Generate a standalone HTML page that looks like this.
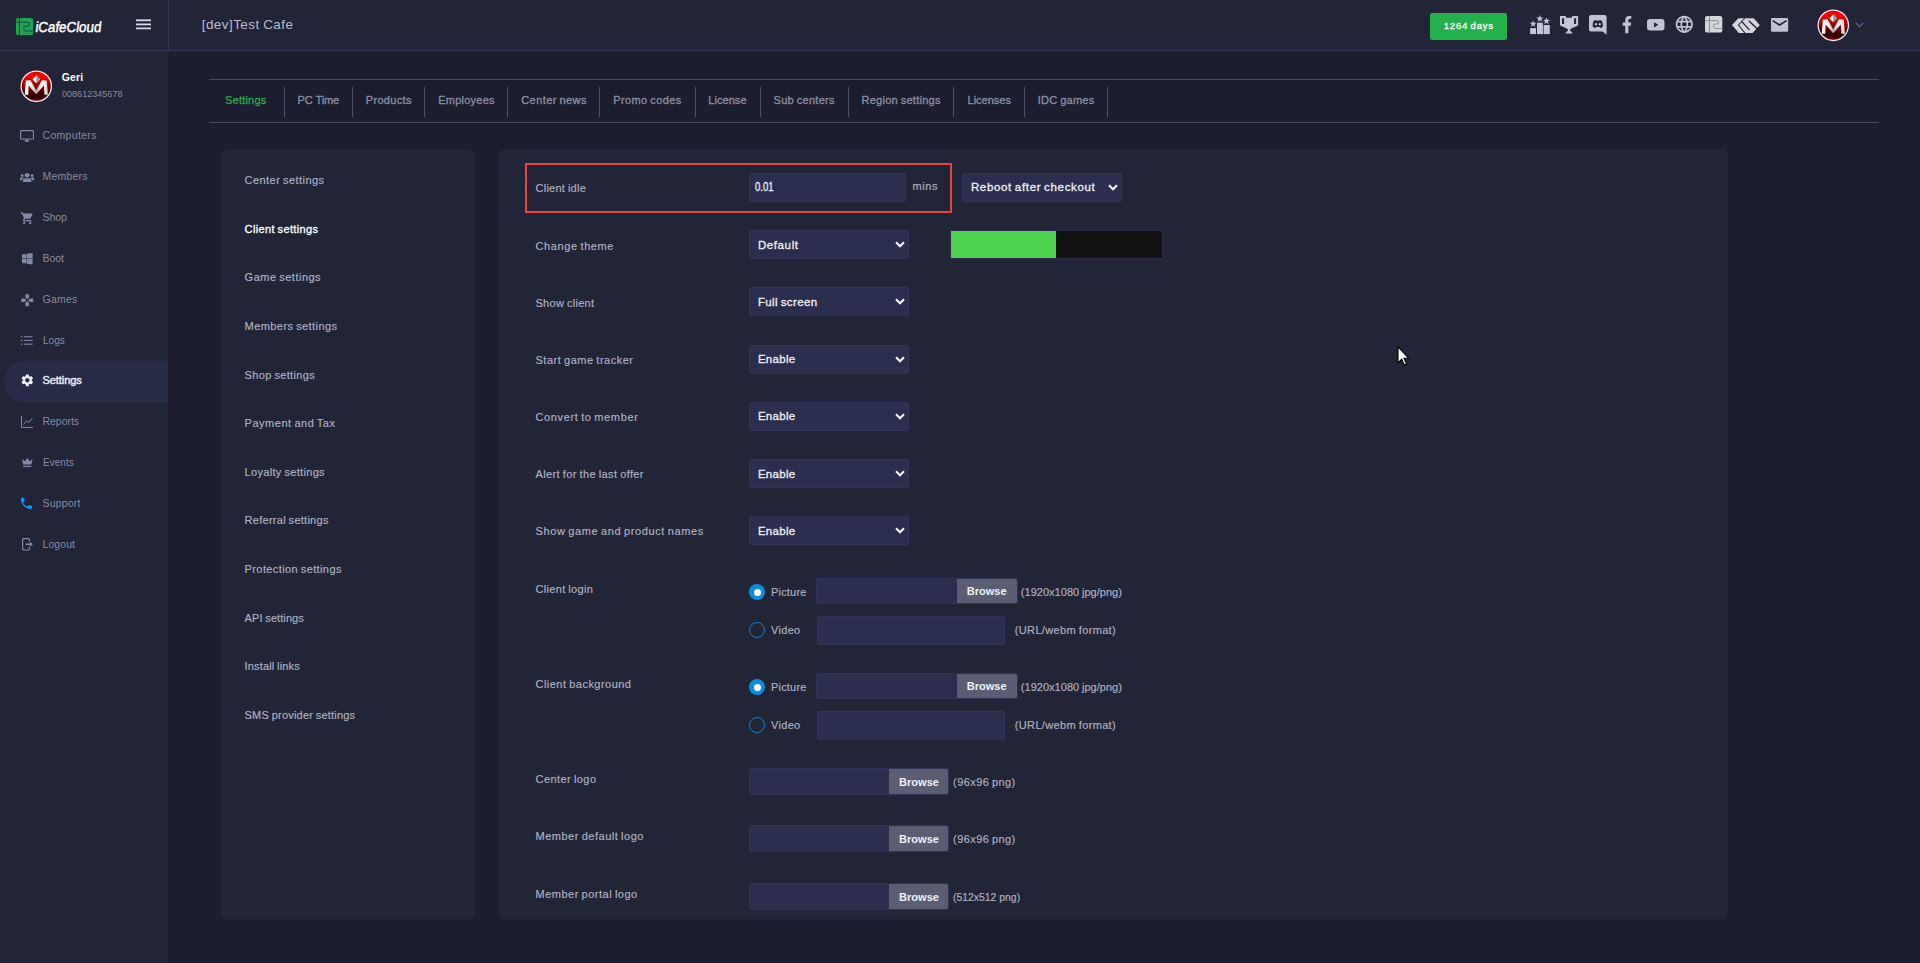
<!DOCTYPE html>
<html lang="en">
<head>
<meta charset="utf-8">
<title>iCafeCloud - Client settings</title>
<style>
*{box-sizing:border-box;margin:0;padding:0}
html,body{width:1920px;height:963px;overflow:hidden;background:#1c1d2e;font-family:"Liberation Sans",sans-serif}
.a{position:absolute}
.t{position:absolute;white-space:pre;line-height:20px;height:20px}
#hdr{left:0;top:0;width:1920px;height:50px;background:#222438}
#hline{left:0;top:50px;width:1920px;height:1px;background:#33355a}
#vline{left:168px;top:0;width:1px;height:50px;background:#33355a}
#side{left:0;top:51px;width:168px;height:912px;background:#222438}
#active{left:4px;top:361px;width:164px;height:41px;background:#282b48;border-radius:20px 0 0 20px}
.hl{height:1px;background:#474a5f;left:209px;width:1670px}
.vs{width:1px;height:30px;top:87px;background:#4d5066}
.panel{background:#222438;border-radius:6px}
.inp{background:#2c2e4f;border:1px solid #30335a;border-radius:2px}
.brw{background:#5a5d73;border-radius:0 2px 2px 0}
.radio{width:16px;height:16px;border-radius:50%}
.r1{background:#0d8ddb}
.r1:after{content:"";position:absolute;left:4.500px;top:4.500px;width:7px;height:7px;border-radius:50%;background:#fff}
.r0{border:1.5px solid #0b84d0}
svg{position:absolute;overflow:visible}
</style>
</head>
<body>
<!-- header + sidebar chrome -->
<div class="a" id="hdr"></div>
<div class="a" id="hline"></div>
<div class="a" id="vline"></div>
<div class="a" id="side"></div>
<div class="a" id="active"></div>

<!-- tab strip -->
<div class="a hl" style="top:79px"></div>
<div class="a hl" style="top:122px"></div>
<div class="a vs" style="left:284px"></div>
<div class="a vs" style="left:352px"></div>
<div class="a vs" style="left:424px"></div>
<div class="a vs" style="left:507px"></div>
<div class="a vs" style="left:599px"></div>
<div class="a vs" style="left:695px"></div>
<div class="a vs" style="left:760px"></div>
<div class="a vs" style="left:848px"></div>
<div class="a vs" style="left:953px"></div>
<div class="a vs" style="left:1024px"></div>
<div class="a vs" style="left:1107px"></div>

<!-- panels -->
<div class="a panel" style="left:221px;top:149px;width:254px;height:770px"></div>
<div class="a panel" style="left:499px;top:149px;width:1229px;height:770px"></div>

<!-- form controls -->
<div class="a" style="left:525px;top:163px;width:427px;height:50px;border:2px solid #ee4242"></div>
<div class="a inp" style="left:749px;top:173px;width:157px;height:29px"></div>
<div class="a inp" style="left:962px;top:173px;width:160px;height:29px"></div>
<div class="a inp" style="left:749px;top:230px;width:160px;height:29px"></div>
<div class="a inp" style="left:749px;top:287px;width:160px;height:29px"></div>
<div class="a inp" style="left:749px;top:345px;width:160px;height:29px"></div>
<div class="a inp" style="left:749px;top:402px;width:160px;height:29px"></div>
<div class="a inp" style="left:749px;top:459px;width:160px;height:29px"></div>
<div class="a inp" style="left:749px;top:516px;width:160px;height:29px"></div>
<!-- theme swatch -->
<div class="a" style="left:950px;top:230px;width:213px;height:29px;background:#111111;border:1px solid #2a2c4a"></div>
<div class="a" style="left:951px;top:231px;width:105px;height:27px;background:#4bd14d"></div>

<!-- client login -->
<div class="a radio r1" style="left:749px;top:584px"></div>
<div class="a inp" style="left:816px;top:578px;width:202px;height:26px"></div>
<div class="a brw" style="left:957px;top:579px;width:60px;height:24px"></div>
<div class="a radio r0" style="left:749px;top:622px"></div>
<div class="a inp" style="left:817px;top:616px;width:188px;height:29px"></div>
<!-- client background -->
<div class="a radio r1" style="left:749px;top:679px"></div>
<div class="a inp" style="left:816px;top:673px;width:202px;height:26px"></div>
<div class="a brw" style="left:957px;top:674px;width:60px;height:24px"></div>
<div class="a radio r0" style="left:749px;top:717px"></div>
<div class="a inp" style="left:817px;top:711px;width:188px;height:29px"></div>
<!-- logos -->
<div class="a inp" style="left:749px;top:768px;width:200px;height:27px"></div>
<div class="a brw" style="left:889px;top:769px;width:59px;height:25px"></div>
<div class="a inp" style="left:749px;top:825px;width:200px;height:27px"></div>
<div class="a brw" style="left:889px;top:826px;width:59px;height:25px"></div>
<div class="a inp" style="left:749px;top:883px;width:200px;height:27px"></div>
<div class="a brw" style="left:889px;top:884px;width:59px;height:25px"></div>

<svg width="0" height="0" style="left:0;top:0">
<defs>
<linearGradient id="avg" x1="0" y1="0" x2="0" y2="1">
<stop offset="0" stop-color="#c40000"/><stop offset="0.13" stop-color="#ff0707"/><stop offset="0.3" stop-color="#d60000"/><stop offset="0.5" stop-color="#8e0000"/><stop offset="0.7" stop-color="#4a0000"/><stop offset="0.84" stop-color="#2e0000"/><stop offset="0.93" stop-color="#5c0000"/><stop offset="1" stop-color="#960000"/>
</linearGradient>
<linearGradient id="avm" x1="0" y1="0" x2="1" y2="0">
<stop offset="0" stop-color="#ffffff"/><stop offset="0.3" stop-color="#f2f2f2"/><stop offset="0.5" stop-color="#a9a9a9"/><stop offset="0.72" stop-color="#f6f6f6"/><stop offset="1" stop-color="#d8d8d8"/>
</linearGradient>

</defs>
</svg>

<!-- logo -->
<svg style="left:16px;top:18px" width="17.200" height="17.100" viewBox="0 0 17.200 17.100">
<rect x="0" y="0" width="17.200" height="17.100" rx="2.200" fill="#20a554"/>
<path d="M3.500 0V17.100" stroke="#1b3a3c" stroke-width="0.900"/>
<path d="M0 4.200H12Q13.600 4.200 13.600 6.200Q13.600 8.200 12 8.200H9.300Q7.700 8.200 7.700 10.400Q7.700 13 9.300 13H17.200" stroke="#1c4440" stroke-width="1" fill="none"/>
</svg>
<!-- hamburger -->
<svg style="left:136px;top:19px" width="15" height="11" viewBox="0 0 15 11">
<rect x="0" y="0.4" width="15" height="1.8" fill="#d9dae4"/><rect x="0" y="4.5" width="15" height="1.8" fill="#d9dae4"/><rect x="0" y="8.5" width="15" height="1.8" fill="#d9dae4"/>
</svg>

<!-- days button -->
<div class="a" style="left:1430px;top:13px;width:77px;height:27px;background:#22b14c;border-radius:2.500px"></div>

<!-- header icons -->
<!-- ranking star -->
<svg style="left:1530px;top:15px" width="20" height="19.200" viewBox="0 0 20 19.200" fill="#c3c6d4">
<rect x="0.100" y="13.100" width="5.900" height="6"/>
<rect x="7" y="7.700" width="5.900" height="11.400"/>
<rect x="13.600" y="10" width="6.200" height="9.100"/>
<path d="M3.10 5.30L3.99 7.68L6.52 7.79L4.54 9.37L5.22 11.81L3.10 10.41L0.98 11.81L1.66 9.37L-0.32 7.79L2.21 7.68Z"/>
<path d="M9.85 -0.10L10.79 2.41L13.46 2.53L11.37 4.19L12.08 6.77L9.85 5.30L7.62 6.77L8.33 4.19L6.24 2.53L8.91 2.41Z"/>
<path d="M16.50 2.40L17.41 4.84L20.02 4.96L17.98 6.58L18.67 9.09L16.50 7.65L14.33 9.09L15.02 6.58L12.98 4.96L15.59 4.84Z"/>
</svg>
<!-- trophy -->
<svg style="left:1560px;top:15.800px" width="18.200" height="17.600" viewBox="0 0 18.200 17.600" fill="#c3c6d4" fill-rule="evenodd">
<path d="M0 0H5.600L6.200 1.700H11.800L12.400 0H18.100V9.200Q16.200 10.700 13.400 11.400L10.100 13.200V14.400L12.900 17.500H5.100L7.900 14.400V13.200L4.600 11.400Q1.800 10.700 0 9.200ZM2 2.200V8H4.100V2.200ZM14 2.200V8H16.100V2.200Z"/>
</svg>
<!-- discord bubble -->
<svg style="left:1589.300px;top:15px" width="17.600" height="19.700" viewBox="0 0 17.600 19.700">
<path d="M2 0H15.600Q17.600 0 17.600 2V19.700L13.600 16.600H2Q0 16.600 0 14.600V2Q0 0 2 0Z" fill="#c0c3d1"/>
<path d="M3.700 11.800Q3.200 8.300 4.800 5.800Q6 5 7.200 4.900l.4.800h2.400l.4-.8q1.200.1 2.400.9Q14.400 8.300 13.900 11.800Q12.600 12.800 11.300 13l-.6-1h-3.800l-.6 1Q5 12.800 3.700 11.800Z" fill="#222438"/>
<ellipse cx="6.900" cy="9.200" rx="1.100" ry="1.250" fill="#c0c3d1"/><ellipse cx="10.700" cy="9.200" rx="1.100" ry="1.250" fill="#c0c3d1"/>
</svg>
<!-- facebook f -->
<svg style="left:1621.600px;top:15.900px" width="10" height="17.200" viewBox="0 0 320 512" fill="#c0c3d1" preserveAspectRatio="none">
<path d="M279.140 288l14.220-92.660h-88.910v-60.130c0-25.350 12.420-50.060 52.240-50.060h40.420V6.260S260.430 0 225.360 0c-73.220 0-121.080 44.380-121.080 124.720v70.620H22.890V288h81.390v224h100.170V288z"/>
</svg>
<!-- youtube -->
<svg style="left:1646.800px;top:18.700px" width="17.500" height="11.600" viewBox="0 0 17.500 11.600">
<rect x="0" y="0" width="17.500" height="11.600" rx="3" fill="#c0c3d1"/>
<path d="M7 3.200L11.300 5.800L7 8.400Z" fill="#222438"/>
</svg>
<!-- globe -->
<svg style="left:1674.300px;top:14px" width="20.600" height="20.600" viewBox="0 0 24 24" fill="#c0c3d1">
<path d="M11.990 2C6.470 2 2 6.480 2 12s4.470 10 9.990 10C17.520 22 22 17.520 22 12S17.520 2 11.990 2zm6.930 6h-2.950c-.32-1.250-.78-2.450-1.380-3.560 1.840.63 3.370 1.910 4.330 3.560zM12 4.040c.83 1.200 1.480 2.530 1.910 3.960h-3.820c.43-1.430 1.080-2.760 1.910-3.960zM4.260 14C4.100 13.360 4 12.690 4 12s.1-1.360.26-2h3.380c-.08.66-.14 1.320-.14 2 0 .68.06 1.340.14 2H4.260zm.82 2h2.950c.32 1.250.78 2.450 1.380 3.560-1.840-.63-3.370-1.900-4.330-3.560zm2.950-8H5.080c.96-1.660 2.490-2.930 4.330-3.560C8.810 5.550 8.350 6.750 8.030 8zM12 19.960c-.83-1.200-1.480-2.530-1.910-3.960h3.820c-.43 1.430-1.080 2.760-1.910 3.960zM14.340 14H9.660c-.09-.66-.16-1.320-.16-2 0-.68.07-1.350.16-2h4.680c.09.65.16 1.320.16 2 0 .68-.07 1.340-.16 2zm.25 5.560c.6-1.110 1.060-2.310 1.380-3.560h2.950c-.96 1.650-2.490 2.930-4.330 3.560zM16.360 14c.08-.66.14-1.320.14-2 0-.68-.06-1.340-.14-2h3.380c.16.64.26 1.310.26 2s-.1 1.360-.26 2h-3.380z"/>
</svg>
<!-- iC grey logo -->
<svg style="left:1705.400px;top:16.400px" width="17.300" height="16.600" viewBox="0 0 17.300 16.600">
<rect x="0" y="0" width="17.300" height="16.600" rx="2.200" fill="#d6d6d8"/>
<path d="M4.400 0V16.600" stroke="#8d8fa0" stroke-width="1.100"/>
<path d="M0 4.600H12.200Q13.600 4.600 13.600 6.300Q13.600 8.100 12.200 8.100H9.900Q8.500 8.100 8.500 10.300Q8.500 12.500 9.900 12.500H17.300" stroke="#8d8fa0" stroke-width="1" fill="none"/>
</svg>
<!-- double-S logo -->
<svg style="left:1732.200px;top:18px" width="27.800" height="15.300" viewBox="0 0 27.800 15.300">
<path d="M0 7.100L6.400 0.200H12.200L5.800 7.100L12.200 15.100H6.800Z" fill="#d6d6d8"/>
<path d="M13.200 0.200H21.700L27.800 7.100L20.700 15.100H13.500L7.100 7.100Z" fill="#d6d6d8"/>
<path d="M9.600 3.400L17.400 11.900" stroke="#222438" stroke-width="1.350"/>
<path d="M16.800 2.700L25.400 11" stroke="#222438" stroke-width="1.350"/>
</svg>
<!-- mail -->
<svg style="left:1770.800px;top:17.500px" width="17.200" height="13.700" viewBox="0 0 17.200 13.700">
<rect x="0" y="0" width="17.200" height="13.700" rx="1.500" fill="#c0c3d1"/>
<path d="M1.600 2.600L8.600 7L15.600 2.600" stroke="#222438" stroke-width="1.500" fill="none"/>
</svg>
<!-- header avatar + chevron -->
<svg style="left:1816.700px;top:8.700px" width="32.600" height="32.600" viewBox="0 0 32 32">
<circle cx="16" cy="16" r="15.6" fill="#1a1018"/>
<circle cx="16" cy="16" r="14.9" fill="url(#avg)" stroke="#efe6e6" stroke-width="1.3"/>
<path d="M4.700 24.300L5.700 10.300L10.300 10L15.900 20L21.500 10L26.300 10.300L27.400 24.300L24 24.300L23.400 15.200L15.900 23.700L8.500 15.200L8.100 24.300Z" fill="url(#avm)"/>
<path d="M15.900 5.400L19.700 9.200L15.900 12.900L12.200 9.200Z" fill="#fbfbfb"/>
<path d="M15.900 5.400L19.700 9.200L15.900 12.900Z" fill="#9c9c9c"/>
</svg>
<svg style="left:1855px;top:22px" width="9" height="6" viewBox="0 0 9 6"><path d="M0.700 0.800L4.500 4.600L8.300 0.800" stroke="#5a6fa6" stroke-width="1.100" fill="none"/></svg>

<!-- sidebar avatar -->
<svg style="left:19.700px;top:69.700px" width="32.600" height="32.600" viewBox="0 0 32 32">
<circle cx="16" cy="16" r="15.6" fill="#1a1018"/>
<circle cx="16" cy="16" r="14.9" fill="url(#avg)" stroke="#efe6e6" stroke-width="1.3"/>
<path d="M4.700 24.300L5.700 10.300L10.300 10L15.900 20L21.500 10L26.300 10.300L27.400 24.300L24 24.300L23.400 15.200L15.900 23.700L8.500 15.200L8.100 24.300Z" fill="url(#avm)"/>
<path d="M15.900 5.400L19.700 9.200L15.900 12.900L12.200 9.200Z" fill="#fbfbfb"/>
<path d="M15.900 5.400L19.700 9.200L15.900 12.900Z" fill="#9c9c9c"/>
</svg>

<!-- sidebar icons -->
<!-- computers -->
<svg style="left:20px;top:130px" width="14" height="12" viewBox="0 0 14 12">
<rect x="0.600" y="0.600" width="12.800" height="8.400" rx="0.800" fill="none" stroke="#838aa8" stroke-width="1.100"/>
<path d="M5.600 9.400h2.800l.9 2.400H4.700z" fill="#838aa8"/>
</svg>
<!-- members -->
<svg style="left:19.900px;top:172.700px" width="14.300" height="9.100" viewBox="0 32 640 448" preserveAspectRatio="none" fill="#838aa8">
<path d="M96 224c35.300 0 64-28.700 64-64s-28.700-64-64-64-64 28.700-64 64 28.700 64 64 64zm448 0c35.300 0 64-28.700 64-64s-28.700-64-64-64-64 28.700-64 64 28.700 64 64 64zm32 32h-64c-17.600 0-33.500 7.100-45.100 18.600 40.300 22.100 68.900 62 75.100 109.400h66c17.700 0 32-14.300 32-32v-32c0-35.300-28.700-64-64-64zm-256 0c61.900 0 112-50.100 112-112S381.900 32 320 32 208 82.100 208 144s50.100 112 112 112zm76.800 32h-8.300c-20.800 10-43.900 16-68.500 16s-47.600-6-68.500-16h-8.300C179.600 288 128 339.600 128 403.200V432c0 26.500 21.500 48 48 48h288c26.500 0 48-21.500 48-48v-28.800c0-63.600-51.600-115.200-115.200-115.200zm-223.700-13.400C161.500 263.100 145.600 256 128 256H64c-35.300 0-64 28.700-64 64v32c0 17.700 14.300 32 32 32h65.900c6.300-47.400 34.900-87.300 75.200-109.400z"/>
</svg>
<!-- shop -->
<svg style="left:19.700px;top:210.600px" width="14.400" height="14.400" viewBox="0 0 24 24" fill="#838aa8">
<path d="M7 18c-1.100 0-1.990.9-1.990 2S5.900 22 7 22s2-.9 2-2-.9-2-2-2zM1 2v2h2l3.600 7.590-1.350 2.450c-.16.28-.25.61-.25.96 0 1.100.9 2 2 2h12v-2H7.420c-.14 0-.25-.11-.25-.25l.03-.12.900-1.630h7.450c.75 0 1.410-.41 1.750-1.030l3.580-6.490c.08-.14.12-.31.120-.48 0-.55-.45-1-1-1H5.210l-.94-2H1zm16 16c-1.100 0-1.990.9-1.990 2s.89 2 1.990 2 2-.9 2-2-.9-2-2-2z"/>
</svg>
<!-- boot (windows) -->
<svg style="left:21.600px;top:253.300px" width="10.600" height="11.500" viewBox="0 0 448 448" fill="#838aa8" preserveAspectRatio="none">
<path d="M0 61.700l183.600-25.300v177.400H0V61.700zm0 324.600l183.600 25.300V236.400H0v149.900zm203.800 28L448 448V236.400H203.800v177.900zm0-380.600v180.100H448V0L203.800 33.700z"/>
</svg>
<!-- games -->
<svg style="left:19.800px;top:292.600px" width="14.400" height="14.400" viewBox="0 0 24 24" fill="#838aa8">
<path d="M15 7.500V2H9v5.500l3 3 3-3zM7.500 9H2v6h5.500l3-3-3-3zM9 16.500V22h6v-5.500l-3-3-3 3zM16.500 9l-3 3 3 3H22V9h-5.500z"/>
</svg>
<!-- logs -->
<svg style="left:21px;top:336px" width="12" height="9" viewBox="0 0 12 9" fill="#838aa8">
<rect x="0" y="0.200" width="1.500" height="1.100"/><rect x="3" y="0.200" width="8.600" height="1.100"/>
<rect x="0" y="3.900" width="1.500" height="1.100"/><rect x="3" y="3.900" width="8.600" height="1.100"/>
<rect x="0" y="7.600" width="1.500" height="1.100"/><rect x="3" y="7.600" width="8.600" height="1.100"/>
</svg>
<!-- settings gear -->
<svg style="left:19.900px;top:373.300px" width="14.600" height="14.600" viewBox="0 0 24 24" fill="#eeeff6">
<path d="M19.140 12.940c.04-.3.06-.61.06-.94 0-.32-.02-.64-.07-.94l2.030-1.580c.18-.14.23-.41.12-.61l-1.920-3.320c-.12-.22-.37-.29-.59-.22l-2.390.96c-.5-.38-1.030-.7-1.620-.94l-.36-2.540c-.04-.24-.24-.41-.48-.41h-3.840c-.24 0-.43.17-.47.41l-.36 2.540c-.59.24-1.130.57-1.620.94l-2.390-.96c-.22-.08-.47 0-.59.220L2.740 8.870c-.12.21-.08.47.12.61l2.030 1.580c-.05.3-.09.63-.09.94s.02.640.07.940l-2.030 1.580c-.18.14-.23.41-.12.610l1.920 3.320c.12.220.37.290.59.220l2.390-.96c.5.38 1.030.7 1.620.94l.36 2.540c.05.24.24.41.48.41h3.840c.24 0 .44-.17.470-.41l.36-2.540c.59-.24 1.130-.56 1.620-.94l2.390.96c.22.08.47 0 .59-.22l1.920-3.320c.12-.22.07-.47-.12-.61l-2.010-1.580zM12 15.600c-1.980 0-3.600-1.620-3.600-3.600s1.620-3.600 3.600-3.600 3.600 1.620 3.600 3.600-1.620 3.600-3.600 3.600z"/>
</svg>
<!-- reports -->
<svg style="left:21px;top:416px" width="12" height="12" viewBox="0 0 12 12" fill="none" stroke="#838aa8">
<path d="M0.500 0V11.400H12" stroke-width="1"/>
<path d="M2.600 8.400L5.600 4.600L7.600 6.600L11.400 2.200" stroke-width="1"/>
</svg>
<!-- events crown -->
<svg style="left:21.800px;top:458.400px" width="10.600" height="9.600" viewBox="0 0 10.600 9.600" fill="#838aa8">
<path d="M0 0.600L2.700 3.600L5.300 0L7.900 3.600L10.600 0.600L9.400 6.600H1.200Z"/>
<rect x="1.200" y="7.800" width="8.200" height="1.300"/>
</svg>
<!-- support phone -->
<svg style="left:19.200px;top:496.400px" width="14.800" height="14.800" viewBox="0 0 24 24" fill="#00a2ff">
<path d="M6.620 10.790c1.440 2.830 3.760 5.140 6.590 6.590l2.200-2.200c.27-.27.67-.36 1.020-.24 1.120.37 2.330.57 3.570.57.55 0 1 .45 1 1V20c0 .55-.45 1-1 1-9.390 0-17-7.610-17-17 0-.55.45-1 1-1h3.500c.55 0 1 .45 1 1 0 1.250.2 2.450.57 3.570.11.35.03.74-.25 1.020l-2.200 2.200z"/>
</svg>
<!-- logout -->
<svg style="left:21.600px;top:538.400px" width="11" height="12.600" viewBox="0 0 11 12.600" fill="none" stroke="#838aa8">
<path d="M7.400 3.600V1.600Q7.400 0.600 6.400 0.600H1.600Q0.600 0.600 0.600 1.600V11Q0.600 12 1.600 12H6.400Q7.400 12 7.400 11V9" stroke-width="1.200"/>
<path d="M3.600 5.500H7.800V3.600L10.800 6.300L7.800 9V7.100H3.600Z" fill="#838aa8" stroke="none"/>
</svg>

<!-- select chevrons -->
<svg style="left:895px;top:241.0px" width="10" height="7" viewBox="0 0 10 7"><path d="M1 1.300L5 5.200L9 1.300" stroke="#f3f4f9" stroke-width="2.100" fill="none"/></svg>
<svg style="left:895px;top:298.0px" width="10" height="7" viewBox="0 0 10 7"><path d="M1 1.300L5 5.200L9 1.300" stroke="#f3f4f9" stroke-width="2.100" fill="none"/></svg>
<svg style="left:895px;top:356.0px" width="10" height="7" viewBox="0 0 10 7"><path d="M1 1.300L5 5.200L9 1.300" stroke="#f3f4f9" stroke-width="2.100" fill="none"/></svg>
<svg style="left:895px;top:413.0px" width="10" height="7" viewBox="0 0 10 7"><path d="M1 1.300L5 5.200L9 1.300" stroke="#f3f4f9" stroke-width="2.100" fill="none"/></svg>
<svg style="left:895px;top:470.2px" width="10" height="7" viewBox="0 0 10 7"><path d="M1 1.300L5 5.200L9 1.300" stroke="#f3f4f9" stroke-width="2.100" fill="none"/></svg>
<svg style="left:895px;top:527.4px" width="10" height="7" viewBox="0 0 10 7"><path d="M1 1.300L5 5.200L9 1.300" stroke="#f3f4f9" stroke-width="2.100" fill="none"/></svg>
<svg style="left:1108.200px;top:183.900px" width="10" height="7" viewBox="0 0 10 7"><path d="M1 1.300L5 5.200L9 1.300" stroke="#f3f4f9" stroke-width="2.100" fill="none"/></svg>

<!-- mouse cursor -->
<svg style="left:1396.500px;top:345.500px;z-index:50" width="13" height="20" viewBox="0 0 13 20">
<path d="M1 0.900V16.900L4.700 13.300L7.300 18.900L9.500 17.900L7 12.300H11.900Z" fill="#ffffff" stroke="#000" stroke-width="1.100" stroke-linejoin="miter"/>
</svg>


<span class="t" style="left:201.70px;top:14.70px;font-size:13.5px;font-weight:400;color:#b9bccc;letter-spacing:0.442px;word-spacing:-0.742px;">[dev]Test Cafe</span>
<span class="t" style="left:1443.70px;top:15.50px;font-size:9.5px;font-weight:400;color:#ffffff;letter-spacing:0.837px;word-spacing:-1.137px;-webkit-text-stroke:0.3px currentColor;">1264 days</span>
<span class="t" style="left:34.60px;top:17.00px;font-size:14.5px;font-weight:400;color:#ffffff;letter-spacing:0.000px;transform:skewX(-7deg) scaleX(0.9199);transform-origin:0 70%;-webkit-text-stroke:0.45px currentColor;">iCafeCloud</span>
<span class="t" style="left:61.80px;top:67.00px;font-size:10.5px;font-weight:700;color:#ffffff;letter-spacing:0.128px;">Geri</span>
<span class="t" style="left:61.80px;top:83.60px;font-size:9.5px;font-weight:400;color:#878ba5;letter-spacing:0.000px;transform:scaleX(0.9542);transform-origin:0 70%;">008612345678</span>
<span class="t" style="left:42.50px;top:125.00px;font-size:10.5px;font-weight:400;color:#878ba5;letter-spacing:0.318px;">Computers</span>
<span class="t" style="left:42.50px;top:166.00px;font-size:10.5px;font-weight:400;color:#878ba5;letter-spacing:0.189px;">Members</span>
<span class="t" style="left:42.50px;top:207.00px;font-size:10.5px;font-weight:400;color:#878ba5;letter-spacing:-0.077px;">Shop</span>
<span class="t" style="left:42.50px;top:248.00px;font-size:10.5px;font-weight:400;color:#878ba5;letter-spacing:-0.070px;">Boot</span>
<span class="t" style="left:42.50px;top:289.00px;font-size:10.5px;font-weight:400;color:#878ba5;letter-spacing:0.214px;">Games</span>
<span class="t" style="left:42.50px;top:329.70px;font-size:10.5px;font-weight:400;color:#878ba5;letter-spacing:0.000px;transform:scaleX(0.9569);transform-origin:0 70%;">Logs</span>
<span class="t" style="left:42.50px;top:370.00px;font-size:11px;font-weight:400;color:#e9eaf3;letter-spacing:-0.064px;-webkit-text-stroke:0.45px currentColor;">Settings</span>
<span class="t" style="left:42.50px;top:411.00px;font-size:10.5px;font-weight:400;color:#878ba5;letter-spacing:-0.044px;">Reports</span>
<span class="t" style="left:42.50px;top:452.00px;font-size:10.5px;font-weight:400;color:#878ba5;letter-spacing:0.000px;transform:scaleX(0.9592);transform-origin:0 70%;">Events</span>
<span class="t" style="left:42.50px;top:493.00px;font-size:10.5px;font-weight:400;color:#878ba5;letter-spacing:0.170px;">Support</span>
<span class="t" style="left:42.50px;top:534.00px;font-size:10.5px;font-weight:400;color:#878ba5;letter-spacing:0.075px;">Logout</span>
<span class="t" style="left:225.00px;top:90.25px;font-size:11px;font-weight:400;color:#2bab4c;letter-spacing:0.214px;-webkit-text-stroke:0.3px currentColor;">Settings</span>
<span class="t" style="left:297.50px;top:90.25px;font-size:11px;font-weight:400;color:#8c90a6;letter-spacing:-0.073px;-webkit-text-stroke:0.3px currentColor;">PC Time</span>
<span class="t" style="left:365.75px;top:90.25px;font-size:11px;font-weight:400;color:#8c90a6;letter-spacing:0.333px;-webkit-text-stroke:0.3px currentColor;">Products</span>
<span class="t" style="left:438.25px;top:90.25px;font-size:11px;font-weight:400;color:#8c90a6;letter-spacing:0.229px;-webkit-text-stroke:0.3px currentColor;">Employees</span>
<span class="t" style="left:521.25px;top:90.25px;font-size:11px;font-weight:400;color:#8c90a6;letter-spacing:0.420px;word-spacing:-0.720px;-webkit-text-stroke:0.3px currentColor;">Center news</span>
<span class="t" style="left:613.25px;top:90.25px;font-size:11px;font-weight:400;color:#8c90a6;letter-spacing:0.387px;word-spacing:-0.688px;-webkit-text-stroke:0.3px currentColor;">Promo codes</span>
<span class="t" style="left:708.25px;top:90.25px;font-size:11px;font-weight:400;color:#8c90a6;letter-spacing:0.055px;-webkit-text-stroke:0.3px currentColor;">License</span>
<span class="t" style="left:773.50px;top:90.25px;font-size:11px;font-weight:400;color:#8c90a6;letter-spacing:0.289px;word-spacing:-0.589px;-webkit-text-stroke:0.3px currentColor;">Sub centers</span>
<span class="t" style="left:861.50px;top:90.25px;font-size:11px;font-weight:400;color:#8c90a6;letter-spacing:0.267px;word-spacing:-0.567px;-webkit-text-stroke:0.3px currentColor;">Region settings</span>
<span class="t" style="left:967.50px;top:90.25px;font-size:11px;font-weight:400;color:#8c90a6;letter-spacing:0.011px;-webkit-text-stroke:0.3px currentColor;">Licenses</span>
<span class="t" style="left:1037.75px;top:90.25px;font-size:11px;font-weight:400;color:#8c90a6;letter-spacing:0.253px;word-spacing:-0.553px;-webkit-text-stroke:0.3px currentColor;">IDC games</span>
<span class="t" style="left:244.60px;top:170.40px;font-size:11px;font-weight:400;color:#b1b4c6;letter-spacing:0.440px;word-spacing:-0.740px;-webkit-text-stroke:0.15px currentColor;">Center settings</span>
<span class="t" style="left:244.60px;top:219.20px;font-size:11px;font-weight:400;color:#ffffff;letter-spacing:0.354px;word-spacing:-0.654px;-webkit-text-stroke:0.3px currentColor;">Client settings</span>
<span class="t" style="left:244.60px;top:267.40px;font-size:11px;font-weight:400;color:#b1b4c6;letter-spacing:0.489px;word-spacing:-0.789px;-webkit-text-stroke:0.15px currentColor;">Game settings</span>
<span class="t" style="left:244.60px;top:316.20px;font-size:11px;font-weight:400;color:#b1b4c6;letter-spacing:0.421px;word-spacing:-0.721px;-webkit-text-stroke:0.15px currentColor;">Members settings</span>
<span class="t" style="left:244.60px;top:365.00px;font-size:11px;font-weight:400;color:#b1b4c6;letter-spacing:0.340px;word-spacing:-0.640px;-webkit-text-stroke:0.15px currentColor;">Shop settings</span>
<span class="t" style="left:244.60px;top:413.20px;font-size:11px;font-weight:400;color:#b1b4c6;letter-spacing:0.517px;word-spacing:-0.817px;-webkit-text-stroke:0.15px currentColor;">Payment and Tax</span>
<span class="t" style="left:244.60px;top:461.80px;font-size:11px;font-weight:400;color:#b1b4c6;letter-spacing:0.319px;word-spacing:-0.619px;-webkit-text-stroke:0.15px currentColor;">Loyalty settings</span>
<span class="t" style="left:244.60px;top:510.20px;font-size:11px;font-weight:400;color:#b1b4c6;letter-spacing:0.267px;word-spacing:-0.567px;-webkit-text-stroke:0.15px currentColor;">Referral settings</span>
<span class="t" style="left:244.60px;top:559.00px;font-size:11px;font-weight:400;color:#b1b4c6;letter-spacing:0.388px;word-spacing:-0.688px;-webkit-text-stroke:0.15px currentColor;">Protection settings</span>
<span class="t" style="left:244.60px;top:608.00px;font-size:11px;font-weight:400;color:#b1b4c6;letter-spacing:0.080px;word-spacing:-0.380px;-webkit-text-stroke:0.15px currentColor;">API settings</span>
<span class="t" style="left:244.60px;top:656.00px;font-size:11px;font-weight:400;color:#b1b4c6;letter-spacing:0.146px;word-spacing:-0.446px;-webkit-text-stroke:0.15px currentColor;">Install links</span>
<span class="t" style="left:244.60px;top:704.70px;font-size:11px;font-weight:400;color:#b1b4c6;letter-spacing:0.194px;word-spacing:-0.494px;-webkit-text-stroke:0.15px currentColor;">SMS provider settings</span>
<span class="t" style="left:535.50px;top:178.30px;font-size:11px;font-weight:400;color:#b1b4c6;letter-spacing:0.254px;word-spacing:-0.554px;-webkit-text-stroke:0.15px currentColor;">Client idle</span>
<span class="t" style="left:535.50px;top:235.60px;font-size:11px;font-weight:400;color:#b1b4c6;letter-spacing:0.613px;word-spacing:-0.913px;-webkit-text-stroke:0.15px currentColor;">Change theme</span>
<span class="t" style="left:535.50px;top:292.60px;font-size:11px;font-weight:400;color:#b1b4c6;letter-spacing:0.282px;word-spacing:-0.582px;-webkit-text-stroke:0.15px currentColor;">Show client</span>
<span class="t" style="left:535.50px;top:350.00px;font-size:11px;font-weight:400;color:#b1b4c6;letter-spacing:0.508px;word-spacing:-0.808px;-webkit-text-stroke:0.15px currentColor;">Start game tracker</span>
<span class="t" style="left:535.50px;top:407.00px;font-size:11px;font-weight:400;color:#b1b4c6;letter-spacing:0.625px;word-spacing:-0.925px;-webkit-text-stroke:0.15px currentColor;">Convert to member</span>
<span class="t" style="left:535.50px;top:464.20px;font-size:11px;font-weight:400;color:#b1b4c6;letter-spacing:0.384px;word-spacing:-0.684px;-webkit-text-stroke:0.15px currentColor;">Alert for the last offer</span>
<span class="t" style="left:535.50px;top:521.30px;font-size:11px;font-weight:400;color:#b1b4c6;letter-spacing:0.621px;word-spacing:-0.921px;-webkit-text-stroke:0.15px currentColor;">Show game and product names</span>
<span class="t" style="left:535.50px;top:579.20px;font-size:11px;font-weight:400;color:#b1b4c6;letter-spacing:0.328px;word-spacing:-0.628px;-webkit-text-stroke:0.15px currentColor;">Client login</span>
<span class="t" style="left:535.50px;top:674.20px;font-size:11px;font-weight:400;color:#b1b4c6;letter-spacing:0.475px;word-spacing:-0.775px;-webkit-text-stroke:0.15px currentColor;">Client background</span>
<span class="t" style="left:535.50px;top:769.20px;font-size:11px;font-weight:400;color:#b1b4c6;letter-spacing:0.436px;word-spacing:-0.736px;-webkit-text-stroke:0.15px currentColor;">Center logo</span>
<span class="t" style="left:535.50px;top:826.30px;font-size:11px;font-weight:400;color:#b1b4c6;letter-spacing:0.514px;word-spacing:-0.814px;-webkit-text-stroke:0.15px currentColor;">Member default logo</span>
<span class="t" style="left:535.50px;top:883.80px;font-size:11px;font-weight:400;color:#b1b4c6;letter-spacing:0.501px;word-spacing:-0.801px;-webkit-text-stroke:0.15px currentColor;">Member portal logo</span>
<span class="t" style="left:754.80px;top:177.40px;font-size:12px;font-weight:400;color:#f0f1f7;letter-spacing:0.000px;transform:scaleX(0.7963);transform-origin:0 70%;-webkit-text-stroke:0.3px currentColor;">0.01</span>
<span class="t" style="left:912.50px;top:176.30px;font-size:11px;font-weight:400;color:#b1b4c6;letter-spacing:0.589px;-webkit-text-stroke:0.15px currentColor;">mins</span>
<span class="t" style="left:970.90px;top:177.40px;font-size:11.5px;font-weight:400;color:#f0f1f7;letter-spacing:0.666px;word-spacing:-0.966px;-webkit-text-stroke:0.3px currentColor;">Reboot after checkout</span>
<span class="t" style="left:757.90px;top:235.20px;font-size:11.5px;font-weight:400;color:#f0f1f7;letter-spacing:0.610px;-webkit-text-stroke:0.3px currentColor;">Default</span>
<span class="t" style="left:757.90px;top:292.10px;font-size:11.5px;font-weight:400;color:#f0f1f7;letter-spacing:0.361px;word-spacing:-0.661px;-webkit-text-stroke:0.3px currentColor;">Full screen</span>
<span class="t" style="left:757.90px;top:349.40px;font-size:11.5px;font-weight:400;color:#f0f1f7;letter-spacing:0.298px;-webkit-text-stroke:0.3px currentColor;">Enable</span>
<span class="t" style="left:757.90px;top:406.40px;font-size:11.5px;font-weight:400;color:#f0f1f7;letter-spacing:0.298px;-webkit-text-stroke:0.3px currentColor;">Enable</span>
<span class="t" style="left:757.90px;top:463.60px;font-size:11.5px;font-weight:400;color:#f0f1f7;letter-spacing:0.298px;-webkit-text-stroke:0.3px currentColor;">Enable</span>
<span class="t" style="left:757.90px;top:520.90px;font-size:11.5px;font-weight:400;color:#f0f1f7;letter-spacing:0.298px;-webkit-text-stroke:0.3px currentColor;">Enable</span>
<span class="t" style="left:771.00px;top:582.20px;font-size:11px;font-weight:400;color:#b1b4c6;letter-spacing:0.192px;-webkit-text-stroke:0.15px currentColor;">Picture</span>
<span class="t" style="left:966.80px;top:581.00px;font-size:11px;font-weight:700;color:#f0f1f7;letter-spacing:0.010px;">Browse</span>
<span class="t" style="left:1020.80px;top:582.20px;font-size:11px;font-weight:400;color:#b1b4c6;letter-spacing:0.028px;word-spacing:-0.328px;-webkit-text-stroke:0.15px currentColor;">(1920x1080 jpg/png)</span>
<span class="t" style="left:771.00px;top:619.60px;font-size:11px;font-weight:400;color:#b1b4c6;letter-spacing:0.316px;-webkit-text-stroke:0.15px currentColor;">Video</span>
<span class="t" style="left:1014.80px;top:619.60px;font-size:11px;font-weight:400;color:#b1b4c6;letter-spacing:0.349px;word-spacing:-0.649px;-webkit-text-stroke:0.15px currentColor;">(URL/webm format)</span>
<span class="t" style="left:771.00px;top:677.20px;font-size:11px;font-weight:400;color:#b1b4c6;letter-spacing:0.192px;-webkit-text-stroke:0.15px currentColor;">Picture</span>
<span class="t" style="left:966.80px;top:676.00px;font-size:11px;font-weight:700;color:#f0f1f7;letter-spacing:0.010px;">Browse</span>
<span class="t" style="left:1020.80px;top:677.20px;font-size:11px;font-weight:400;color:#b1b4c6;letter-spacing:0.028px;word-spacing:-0.328px;-webkit-text-stroke:0.15px currentColor;">(1920x1080 jpg/png)</span>
<span class="t" style="left:771.00px;top:714.60px;font-size:11px;font-weight:400;color:#b1b4c6;letter-spacing:0.316px;-webkit-text-stroke:0.15px currentColor;">Video</span>
<span class="t" style="left:1014.80px;top:714.60px;font-size:11px;font-weight:400;color:#b1b4c6;letter-spacing:0.349px;word-spacing:-0.649px;-webkit-text-stroke:0.15px currentColor;">(URL/webm format)</span>
<span class="t" style="left:899.00px;top:772.00px;font-size:11px;font-weight:700;color:#f0f1f7;letter-spacing:0.050px;">Browse</span>
<span class="t" style="left:953.10px;top:772.00px;font-size:11px;font-weight:400;color:#b1b4c6;letter-spacing:0.420px;word-spacing:-0.720px;-webkit-text-stroke:0.15px currentColor;">(96x96 png)</span>
<span class="t" style="left:899.00px;top:829.30px;font-size:11px;font-weight:700;color:#f0f1f7;letter-spacing:0.050px;">Browse</span>
<span class="t" style="left:953.10px;top:829.30px;font-size:11px;font-weight:400;color:#b1b4c6;letter-spacing:0.420px;word-spacing:-0.720px;-webkit-text-stroke:0.15px currentColor;">(96x96 png)</span>
<span class="t" style="left:899.00px;top:886.60px;font-size:11px;font-weight:700;color:#f0f1f7;letter-spacing:0.050px;">Browse</span>
<span class="t" style="left:953.10px;top:886.60px;font-size:11px;font-weight:400;color:#b1b4c6;letter-spacing:0.000px;transform:scaleX(0.9457);transform-origin:0 70%;-webkit-text-stroke:0.15px currentColor;">(512x512 png)</span>

</body>
</html>
